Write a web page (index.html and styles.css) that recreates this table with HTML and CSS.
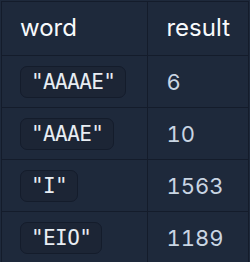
FILE: index.html
```html
<!DOCTYPE html>
<html>
<head>
<meta charset="utf-8">
<link rel="stylesheet" href="styles.css">
</head>
<body>
<table class="grid">
  <thead>
    <tr><th class="col-word">word</th><th>result</th></tr>
  </thead>
  <tbody>
    <tr><td class="col-word"><code class="tag">"AAAAE"</code></td><td class="num">6</td></tr>
    <tr><td class="col-word"><code class="tag">"AAAE"</code></td><td class="num">10</td></tr>
    <tr><td class="col-word"><code class="tag">"I"</code></td><td class="num">1563</td></tr>
    <tr><td class="col-word"><code class="tag">"EIO"</code></td><td class="num">1189</td></tr>
  </tbody>
</table>
</body>
</html>
```
FILE: styles.css
```css
html, body {
  margin: 0;
  background: #1e293b;
}
body {
  padding: 1px;
  font-family: Inter, "Noto Sans", sans-serif;
}
.grid {
  width: 248px;
  border-collapse: collapse;
  border: 1px solid #141c2b;
}
.grid th, .grid td {
  border: 1px solid #141c2b;
  text-align: left;
  padding: 0 18px;
  height: 51px;
  vertical-align: middle;
}
.grid th {
  color: #f8fafc;
  font-weight: 400;
  font-size: 24px;
  padding-bottom: 2px;
}
.col-word {
  width: 110px;
}
.num {
  color: #c9d5e3;
  font-size: 22px;
  font-variant-numeric: tabular-nums;
}
.tag {
  display: inline-block;
  font-family: "DejaVu Sans Mono", monospace;
  font-size: 21px;
  letter-spacing: -0.6px;
  line-height: 30px;
  padding: 0 10px 0 10px;
  border: 1px solid #141c2b;
  border-radius: 7px;
  background: #1c2535;
  color: #e8edf3;
}
```
